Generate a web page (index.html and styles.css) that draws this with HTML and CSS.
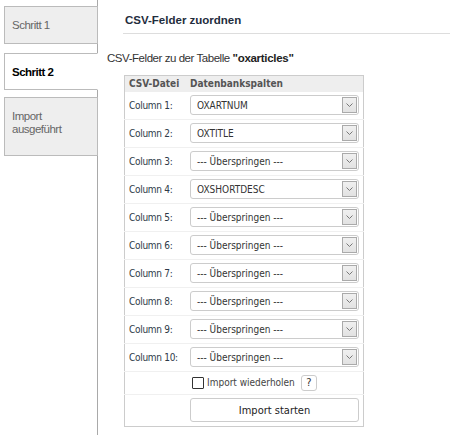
FILE: index.html
```html
<!DOCTYPE html>
<html>
<head>
<meta charset="utf-8">
<link rel="stylesheet" href="styles.css">
</head>
<body>
<div class="page">
  <nav class="sidebar">
    <div class="tab">Schritt 1</div>
    <div class="tab active">Schritt 2</div>
    <div class="tab tall">Import<br>ausgeführt</div>
  </nav>
  <main class="main">
    <h2 class="heading">CSV-Felder zuordnen</h2>
    <p class="desc">CSV-Felder zu der Tabelle <b>"oxarticles"</b></p>
    <table class="map">
      <thead>
        <tr><th class="c1">CSV-Datei</th><th class="c2">Datenbankspalten</th></tr>
      </thead>
      <tbody>
        <tr><td class="c1">Column 1:</td><td class="c2"><div class="sel"><span class="val">OXARTNUM</span><span class="arr"><svg width="9" height="6" viewBox="0 0 9 6"><path d="M1.5 1.5 L4.5 4.5 L7.5 1.5" fill="none" stroke="#777" stroke-width="1"/></svg></span></div></td></tr>
        <tr><td class="c1">Column 2:</td><td class="c2"><div class="sel"><span class="val">OXTITLE</span><span class="arr"><svg width="9" height="6" viewBox="0 0 9 6"><path d="M1.5 1.5 L4.5 4.5 L7.5 1.5" fill="none" stroke="#777" stroke-width="1"/></svg></span></div></td></tr>
        <tr><td class="c1">Column 3:</td><td class="c2"><div class="sel"><span class="val">--- Überspringen ---</span><span class="arr"><svg width="9" height="6" viewBox="0 0 9 6"><path d="M1.5 1.5 L4.5 4.5 L7.5 1.5" fill="none" stroke="#777" stroke-width="1"/></svg></span></div></td></tr>
        <tr><td class="c1">Column 4:</td><td class="c2"><div class="sel"><span class="val">OXSHORTDESC</span><span class="arr"><svg width="9" height="6" viewBox="0 0 9 6"><path d="M1.5 1.5 L4.5 4.5 L7.5 1.5" fill="none" stroke="#777" stroke-width="1"/></svg></span></div></td></tr>
        <tr><td class="c1">Column 5:</td><td class="c2"><div class="sel"><span class="val">--- Überspringen ---</span><span class="arr"><svg width="9" height="6" viewBox="0 0 9 6"><path d="M1.5 1.5 L4.5 4.5 L7.5 1.5" fill="none" stroke="#777" stroke-width="1"/></svg></span></div></td></tr>
        <tr><td class="c1">Column 6:</td><td class="c2"><div class="sel"><span class="val">--- Überspringen ---</span><span class="arr"><svg width="9" height="6" viewBox="0 0 9 6"><path d="M1.5 1.5 L4.5 4.5 L7.5 1.5" fill="none" stroke="#777" stroke-width="1"/></svg></span></div></td></tr>
        <tr><td class="c1">Column 7:</td><td class="c2"><div class="sel"><span class="val">--- Überspringen ---</span><span class="arr"><svg width="9" height="6" viewBox="0 0 9 6"><path d="M1.5 1.5 L4.5 4.5 L7.5 1.5" fill="none" stroke="#777" stroke-width="1"/></svg></span></div></td></tr>
        <tr><td class="c1">Column 8:</td><td class="c2"><div class="sel"><span class="val">--- Überspringen ---</span><span class="arr"><svg width="9" height="6" viewBox="0 0 9 6"><path d="M1.5 1.5 L4.5 4.5 L7.5 1.5" fill="none" stroke="#777" stroke-width="1"/></svg></span></div></td></tr>
        <tr><td class="c1">Column 9:</td><td class="c2"><div class="sel"><span class="val">--- Überspringen ---</span><span class="arr"><svg width="9" height="6" viewBox="0 0 9 6"><path d="M1.5 1.5 L4.5 4.5 L7.5 1.5" fill="none" stroke="#777" stroke-width="1"/></svg></span></div></td></tr>
        <tr><td class="c1">Column 10:</td><td class="c2"><div class="sel"><span class="val">--- Überspringen ---</span><span class="arr"><svg width="9" height="6" viewBox="0 0 9 6"><path d="M1.5 1.5 L4.5 4.5 L7.5 1.5" fill="none" stroke="#777" stroke-width="1"/></svg></span></div></td></tr>
        <tr class="chkrow"><td class="c1"></td><td class="c2"><div class="chk"><span class="box"></span><span class="lbl">Import wiederholen</span><span class="help">?</span></div></td></tr>
        <tr class="btnrow"><td class="c1"></td><td class="c2"><div class="btn">Import starten</div></td></tr>
      </tbody>
    </table>
  </main>
</div>
</body>
</html>
```

FILE: styles.css
```css
html, body {
  margin: 0;
  padding: 0;
  background: #fff;
}
body {
  font-family: "Liberation Sans", Arial, sans-serif;
  font-size: 12px;
  color: #333;
}
.page {
  display: flex;
  min-height: 435px;
}
.sidebar {
  width: 97px;
  flex: none;
  border-right: 1px solid #a9a9a9;
  padding-top: 6px;
  box-sizing: content-box;
}
.tab {
  margin-left: 4px;
  margin-right: -1px;
  height: 36px;
  border: 1px solid #bbb;
  background: #eee;
  color: #666;
  padding: 0 7px;
  display: flex;
  align-items: center;
  margin-bottom: 9px;
  font-size: 11.5px;
  letter-spacing: -0.5px;
}
.tab.active {
  background: #fff;
  border-right-color: #fff;
  color: #000;
  font-weight: bold;
  height: 35px;
  margin-top: 1px;
  margin-bottom: 7px;
}
.tab.tall {
  line-height: 13px;
  align-items: flex-start;
  padding-top: 12px;
  box-sizing: border-box;
  height: 59px;
}
.main {
  flex: 1;
  padding-left: 9px;
  min-width: 0;
}
.heading {
  margin: 13px 0 0 16px;
  padding: 0 0 6px 2px;
  font-size: 11.5px;
  font-weight: bold;
  color: #1f2d3d;
  border-bottom: 1px solid #ddd;
  line-height: 14px;
}
.desc {
  margin: 17px 0 10px 0;
  font-size: 11.5px;
  letter-spacing: -0.45px;
  line-height: 14px;
  color: #333;
}
.desc b { color: #222; letter-spacing: -0.3px; }
.map {
  margin-left: 17px;
  border: 1px solid #ccc;
  border-collapse: collapse;
  width: 240px;
  font-family: "DejaVu Sans Condensed", "DejaVu Sans", sans-serif;
  font-size: 10px;
  color: #2d3a48;
}
.map th {
  background: #eee;
  text-align: left;
  color: #555;
  font-weight: bold;
  height: 16px;
  padding: 0 4px;
  line-height: 16px;
}
.map td {
  padding: 3px 4px 4px;
  border-bottom: 1px solid #f0f0f0;
}
.map td.c1 { letter-spacing: -0.3px; }
.map .c1 { width: 53px; }
.sel {
  height: 18px;
  border: 1px solid #ccc;
  border-radius: 3px;
  display: flex;
  align-items: center;
  justify-content: space-between;
  padding-left: 6px;
  padding-right: 1px;
  color: #333;
}
.arr {
  width: 13px;
  height: 14px;
  border: 1px solid #aaa;
  background: linear-gradient(#f0f0f0, #e2e2e2);
  display: flex;
  align-items: center;
  justify-content: center;
}
.chkrow td { padding: 2px 4px 3px; }
.chk {
  display: flex;
  align-items: center;
  height: 17px;
  padding-left: 2px;
}
.box {
  width: 10px;
  height: 10px;
  border: 1px solid #333;
  border-radius: 1px;
  margin-right: 3px;
  background: #fff;
}
.lbl { color: #444; }
.help {
  margin-left: 6px;
  width: 14px;
  height: 14px;
  border: 1px solid #ccc;
  border-radius: 3px;
  display: flex;
  align-items: center;
  justify-content: center;
  font-size: 11px;
  color: #333;
}
.btnrow td { padding: 3px 4px 4px; border-bottom: none; }
.btn {
  height: 22px;
  border: 1px solid #ccc;
  border-radius: 3px;
  display: flex;
  align-items: center;
  justify-content: center;
  font-size: 11px;
  color: #222;
  background: #fff;
}
```
